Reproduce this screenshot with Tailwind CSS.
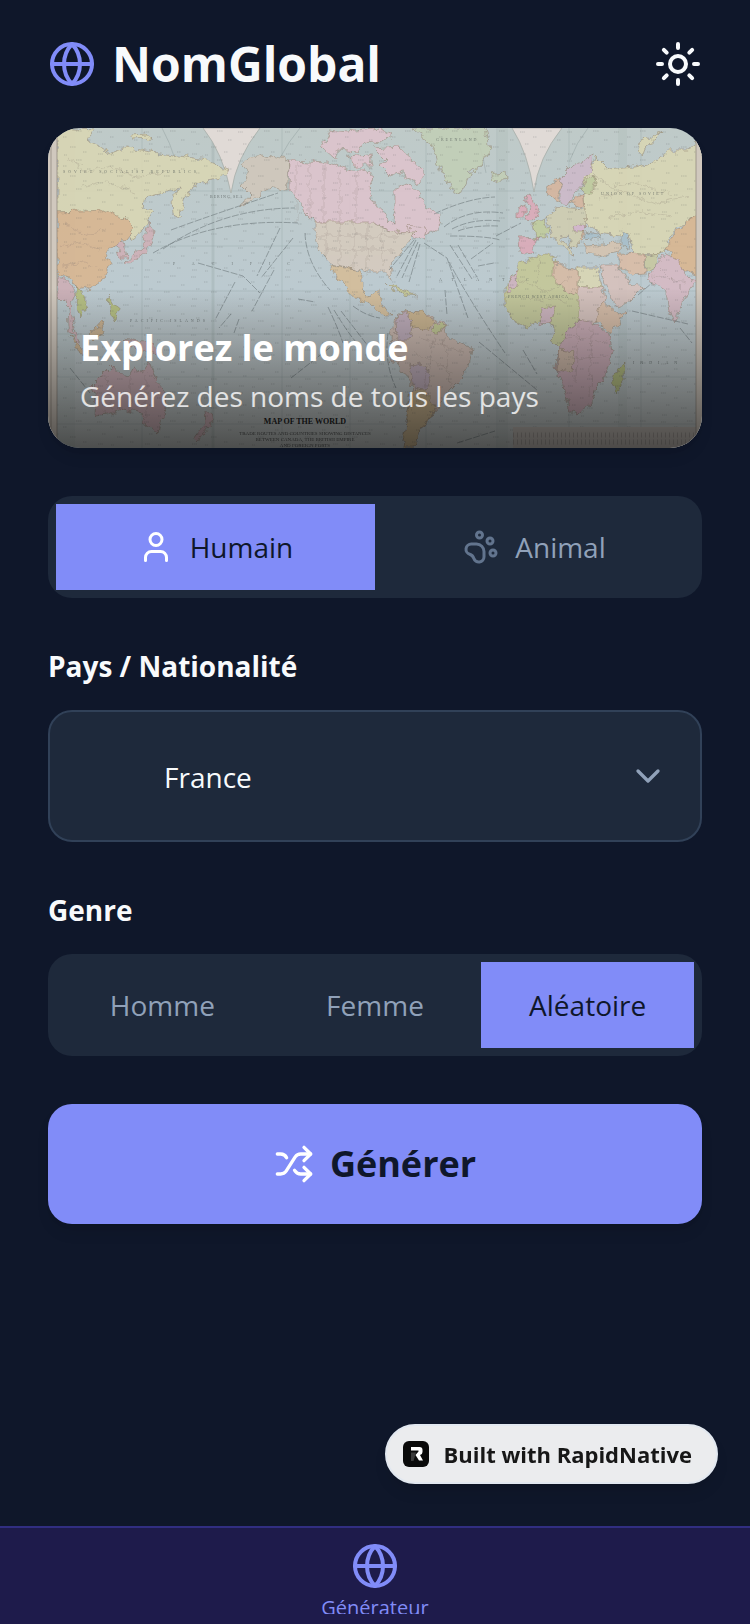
<!DOCTYPE html>
<html lang="fr">
    <head>
        <meta charset="utf-8">
        <meta name="viewport" content="width=device-width, initial-scale=1">
        <title>NomGlobal</title>
        <script src="https://cdn.jsdelivr.net/npm/@tailwindcss/browser@4"></script>
    </head>
    <body class="flex flex-col min-h-screen bg-[#0f172a] text-slate-50 font-['Open_Sans','Noto_Sans',sans-serif]">

        <!-- shared icons -->
        <svg class="hidden">
            <symbol id="globe" viewBox="0 0 24 24">
                <circle cx="12" cy="12" r="10"/>
                <path d="M12 2a14.5 14.5 0 0 0 0 20 14.5 14.5 0 0 0 0-20"/>
                <path d="M2 12h20"/>
            </symbol>
        </svg>

        <header class="flex items-center justify-between px-12 py-8">
            <div class="flex items-center gap-4">
                <svg class="size-12 text-[#818cf8]" fill="none" stroke="currentColor" stroke-width="2" stroke-linecap="round" stroke-linejoin="round"><use href="#globe"/></svg>
                <h1 class="text-5xl leading-16 font-bold">NomGlobal</h1>
            </div>
            <button type="button" aria-label="Changer le thème">
                <svg class="size-12" viewBox="0 0 24 24" fill="none" stroke="currentColor" stroke-width="2" stroke-linecap="round" stroke-linejoin="round">
                    <circle cx="12" cy="12" r="4"/>
                    <path d="M12 2v2M12 20v2M4.93 4.93l1.41 1.41M17.66 17.66l1.41 1.41M2 12h2M20 12h2M6.34 17.66l-1.41 1.41M19.07 4.93l-1.41 1.41"/>
                </svg>
            </button>
        </header>

        <main class="flex flex-col flex-1 gap-12 px-12 pb-12">

            <section class="relative h-80 rounded-4xl overflow-hidden shadow-lg">
                <svg class="w-full h-full" viewBox="0 0 654 320" preserveAspectRatio="xMidYMid slice" aria-hidden="true">
                    <defs>
                        <linearGradient id="sea" x1="0" y1="0" x2="0" y2="1">
                            <stop offset="0" stop-color="#bfcac8"/>
                            <stop offset=".5" stop-color="#bccad0"/>
                            <stop offset="1" stop-color="#c0c4c2"/>
                        </linearGradient>
                        <filter id="coast" x="-5%" y="-5%" width="110%" height="110%">
                            <feTurbulence type="fractalNoise" baseFrequency=".13" numOctaves="3" seed="4" result="n"/>
                            <feDisplacementMap in="SourceGraphic" in2="n" scale="9" xChannelSelector="R" yChannelSelector="G"/>
                        </filter>
                        <pattern id="places" width="47" height="29" patternUnits="userSpaceOnUse">
                            <path d="M2 4h5M15 9h4M28 3h6M39 12h4M7 16h4M22 19h6M35 24h4M3 26h5M16 27h3" stroke="#4d5353" stroke-width=".6" stroke-dasharray="1.4 .7" opacity=".4"/>
                        </pattern>
                    </defs>
                    <rect width="654" height="320" fill="url(#sea)"/>

                    <!-- paper folds and graticule -->
                    <path d="M9 0h18v320H9zM163 0h4v320h-4zM450 0h10v320h-10zM570 0h9v320h-9z" fill="#8e9c96" opacity=".1"/>
                    <path d="M94 0v320M165 0v320M234 0v320M302 0v320M378 0v320M449 0v320M521 0v320M593 0v320M8 63h640M8 118h640M8 163h640M8 206h640M8 249h640M8 296h640" fill="none" stroke="#859391" stroke-width=".6" opacity=".4"/>
                    <path d="M114 0q8 14 14 34M252 0q-12 14-20 30M424 0q10 20 14 45M540 0q-12 15-18 32" fill="none" stroke="#859391" stroke-width=".6" opacity=".6"/>
                    <path d="M155 0Q175 25 183 65Q188 30 212 0ZM464 0Q480 25 486 64Q490 30 514 0Z" fill="#e0dad6" stroke="#a5aaa5" stroke-width=".7"/>

                    <!-- land -->
                    <g filter="url(#coast)" opacity=".88" stroke="#86745f" stroke-width=".8" stroke-opacity=".6" stroke-linejoin="round">
                        <g fill="#dad7b3">
                            <path d="M9 0L46 2L38 12L52 19L62 25L79 19L102 24L125 27L159 32L180 42L175 49L155 54L145 58L137 70L131 89L125 87L124 72L132 60L115 64L98 69L96 79L104 84L95 102L84 112L75 92L55 84L9 84Z"/>
                            <path d="M535 49L549 29L562 42L585 39L605 35L622 22L640 22L654 10V87L629 99L619 115L622 120L609 127L586 126L582 106L572 108L552 105L535 92Z"/>
                            <path d="M588 24L592 14L615 4L607 12L597 20L594 28ZM82 7L98 6L103 10L85 11Z"/>
                            <path d="M530 139L549 139L554 159L530 159Z"/>
                        </g>
                        <g fill="#dab58f">
                            <path d="M9 84L57 82L75 89L86 100L74 115L61 120L57 125L62 135L57 149L44 159L30 162L22 149L9 147Z"/>
                            <path d="M654 84L629 102L619 119L629 139L654 149Z"/>
                        </g>
                        <g fill="#cfafb6">
                            <path d="M9 149L20 152L27 165L22 179L27 205L33 214L29 216L21 199L20 179L10 169Z"/>
                            <path d="M69 117L76 114L79 130L72 130ZM101 92L106 109L98 124L81 137L77 135L95 119L98 105Z"/>
                            <path d="M42 259L54 247L64 237L72 246L79 249L85 239L94 244L101 232L108 252L118 265L119 282L112 294L110 306L99 297L94 285L75 281L59 286L47 287L48 272Z"/>
                            <path d="M157 282L166 289L161 299L149 314L146 311L158 295Z"/>
                            <path d="M74 211L105 215L115 230L94 222Z"/>
                        </g>
                        <path d="M29 159L38 171L38 182L32 190L28 175ZM61 167L69 182L68 194L62 182ZM568 244L577 234L576 252L569 265L565 258Z" fill="#b5bf7b"/>
                        <path d="M41 207L54 192L57 204L47 212ZM22 207L36 224L33 228Z" fill="#cdb18d"/>

                        <path d="M194 37L204 29L214 26L242 32L239 63L227 60L219 61L205 72L190 80L204 67L194 57L201 49Z" fill="#d1c7ba"/>
                        <g fill="#dfc3cc">
                            <path d="M242 32L279 34L302 42L317 42L327 49L321 59L324 75L334 82L341 92L346 97L347 75L347 59L361 55L374 69L378 79L388 84L393 96L384 104L370 108L344 104L329 96L267 94L257 84L251 70L241 62Z"/>
                            <path d="M274 19L282 2L300 4L332 0L344 7L334 15L318 13L310 24L290 22L286 30ZM326 20L350 18L365 32L376 47L369 57L352 44L342 48L332 38L340 34ZM300 28L322 26L324 38L306 38ZM360 97L378 100L376 112L362 107Z"/>
                        </g>
                        <path d="M267 94L324 94L344 104L368 105L362 111L352 126L342 137L344 151L338 144L322 144L307 141L284 136L271 121L267 104Z" fill="#d7cbbe"/>
                        <path d="M281 136L307 141L314 146L314 161L322 169L332 162L333 174L343 188L336 188L324 177L307 170L296 158Z" fill="#d6bd98"/>
                        <path d="M336 155L352 161L370 168L354 166Z" fill="#c6c894"/>
                        <path d="M362 0L437 0L441 22L431 39L421 47L412 66L404 61L392 42L386 22L377 9ZM442 46L457 44L458 51L446 54Z" fill="#c2ceb5"/>

                        <path d="M347 189L357 182L374 184L396 195L399 209L424 222L421 237L414 249L402 261L397 271L385 284L372 305L367 320L354 320L361 279L364 255L345 232L343 209Z" fill="#ccb7ad"/>
                        <path d="M348 189L357 183L364 195L362 212L349 212ZM362 238L374 236L384 250L378 262L366 260Z" fill="#c0abb9"/>
                        <path d="M359 183L374 184L386 193L378 205L364 197ZM363 262L378 264L387 280L372 305L367 320L354 320Z" fill="#ccb38a"/>
                        <path d="M386 193L396 197L394 206L385 204Z" fill="#c2c78f"/>

                        <path d="M476 69L482 67L491 85L487 92L478 91L482 80ZM470 81L477 77L477 89L470 89ZM470 110L491 109L486 122L477 127L471 124Z" fill="#dca9b8"/>
                        <path d="M484 97L496 91L501 104L496 110L487 109ZM540 50L531 62L544 66L548 48Z" fill="#c1cb9b"/>
                        <path d="M512 50L526 36L545 28L542 44L531 60L520 78L512 74Z" fill="#cdb9c9"/>
                        <path d="M498 60L512 50L510 72L499 66ZM524 72L534 66L536 78L526 80ZM527 104L536 104L534 114L526 114Z" fill="#d6b49d"/>
                        <path d="M498 89L511 80L537 82L538 97L530 117L524 121L520 107L512 109L526 126L520 126L504 108Z" fill="#d0ccb0"/>
                        <path d="M525 98q6-4 13 0l-2 6h-10z" fill="#d4b4cb"/>

                        <path d="M537 117L572 115L571 124L551 128L537 126Z" fill="#d5c3b0"/>
                        <path d="M571 125L597 126L597 146L584 147L571 137Z" fill="#dbbca6"/>
                        <path d="M551 137L571 137L581 154L596 159L581 174L569 179L557 157ZM529 159L554 159L557 169L551 194L537 197L530 190Z" fill="#d8c1bb"/>
                        <path d="M599 150L617 125L631 132L636 147L649 154L641 164L631 181L629 196L621 182L617 161Z" fill="#d6b9c3"/>
                        <path d="M597 128L612 126L606 140L598 145Z" fill="#c8c8a0"/>
                        <path d="M472 134L491 127L506 127L507 137L517 161L531 167L531 192L517 205L511 221L504 214L506 199L494 192L477 199L464 191L457 177L457 161L467 144Z" fill="#c4c796"/>
                        <path d="M462 153L470 140L468 158L459 164ZM494 180L508 178L503 194L493 196Z" fill="#cfb2be"/>
                        <path d="M506 136L530 141L530 167L517 161L506 152ZM554 172L571 187L580 184L563 205L549 194Z" fill="#d8baa3"/>
                        <path d="M511 221L517 205L531 192L544 195L561 205L564 224L557 251L549 259L544 274L531 286L522 284L514 254L507 239Z" fill="#cba9b3"/>
                        <path d="M511 222L526 224L524 244L508 240Z" fill="#ceb6a3"/>

                        <!-- inner frontiers and rivers -->
                        <path d="M248 34v60M262 36v58M276 36v58M292 42v52M308 44v50M278 94v38M292 94v42M306 94v46M320 94v50M334 98v40M270 108h80M276 122h70M18 96l22 12 18-8M14 120l20-6 18 8M14 138l22-4 14 6M20 30l20 14 22-6 24 12 30-6M34 60l24-6 28 10M545 45l18 14 28-4 32 12M550 70l28-6 30 12 34-8M560 90l30-6 34 6M470 150l28 14 24-14M478 170l40 4M492 130l-4 26M514 208l44 6M516 232l44-4M530 196l-2 60M544 198l-2 70M372 210l44 14M366 224l38 20M386 208l-10 50M396 212l6 44M60 250l4 32M82 248v34M98 246v44M612 140l20 20M604 148l34 6" fill="none" stroke="#7e6f68" stroke-width=".6" stroke-opacity=".4"/>
                        <path d="M574 102l8 6-2 12-6-2zM538 104l14 2-2 6-14-2z" fill="#a8bfca"/>
                    </g>
                    <rect x="8" y="0" width="640" height="320" fill="url(#places)"/>

                    <!-- shipping routes -->
                    <g fill="none" stroke="#5d676a" stroke-width=".7" stroke-dasharray="7 1.5" opacity=".7">
                        <path d="M105 125Q165 90 250 95M115 121Q175 80 247 80M123 102Q155 90 230 65M150 135L195 148L212 165M232 100L209 148M245 110L213 150M226 142L204 183M187 154L167 192M183 186L171 200M191 191L186 205M257 105Q258 135 282 162M280 179Q290 200 295 215M286 182Q300 205 308 214M293 183Q310 205 320 218M305 178Q318 188 332 190M250 171l17 3"/>
                        <path d="M386 86Q420 70 447 69M396 99Q420 80 455 85M404 101Q425 90 452 93M410 103Q425 97 450 98M376 115L399 130L420 190M401 134Q420 170 457 225M402 108Q440 108 452 112M402 117l22 34M410 117l19 32M448 108l25-13M423 131l22-16M430 138l16-3M368 112L348 150M370 114L354 150M372 116L361 154M366 112L341 142M431 214L489 262M475 222l14 24M397 162l2 25M584 183L640 196M632 200l12 15M590 167l14-12M340 205Q336 235 348 260M243 250l46-36M409 315l38-12M22 240l20 25"/>
                    </g>
                    <g font-family="Liberation Serif, serif" fill="#4f5655" font-size="4" opacity=".7">
                        <text x="125" y="137" letter-spacing="17">PACIFIC</text>
                        <text x="15" y="45" letter-spacing="3">SOVIET SOCIALIST REPUBLICS</text>
                        <text x="162" y="70" letter-spacing="1">BERING SEA</text>
                        <text x="388" y="13" letter-spacing="2">GREENLAND</text>
                        <text x="391" y="153" letter-spacing="10">ATLANTIC</text>
                        <text x="553" y="67" letter-spacing="2">UNION OF SOVIET</text>
                        <text x="460" y="170" letter-spacing="1">FRENCH WEST AFRICA</text>
                        <text x="585" y="236" letter-spacing="6">INDIAN</text>
                        <text x="82" y="194" letter-spacing="3">PACIFIC ISLANDS</text>
                    </g>

                    <!-- cartouche and scale -->
                    <g font-family="Liberation Serif, serif" text-anchor="middle" fill="#1e1e1e">
                        <text x="257" y="296" font-size="8" font-weight="bold">MAP OF THE WORLD</text>
                        <text x="257" y="307" font-size="5" opacity=".7">TRADE ROUTES AND COUNTRIES SHOWING DISTANCES</text>
                        <text x="257" y="313" font-size="5" opacity=".7">BETWEEN CANADA, THE BRITISH EMPIRE</text>
                        <text x="257" y="319" font-size="5" opacity=".7">AND FOREIGN PORTS</text>
                    </g>
                    <path d="M465 299H648V320H465Z" fill="#c0bab4"/>
                    <path d="M465 307H648M465 314H648" stroke="#5a5450" stroke-width="5" stroke-dasharray="1 3" opacity=".25"/>
                    <path d="M0 0H9V320H0ZM648 0H654V320H648Z" fill="#d0c8be"/>
                    <path d="M3 0V320M9 0V320M648 0V320" stroke="#8b8378" stroke-width=".7"/>
                </svg>
                <div class="absolute inset-x-0 bottom-0 p-8 bg-linear-to-t from-black/60 to-transparent text-white">
                    <h2 class="text-4xl leading-14 font-bold">Explorez le monde</h2>
                    <p class="text-[28px] leading-10 text-white/80">Générez des noms de tous les pays</p>
                </div>
            </section>

            <div class="grid grid-cols-2 p-2 rounded-3xl bg-[#1e293b] text-[28px] leading-[38px]" role="group" aria-label="Type">
                <button type="button" aria-pressed="true" class="flex items-center justify-center gap-4 py-6 bg-[#818cf8] text-slate-900">
                    <svg class="size-9 text-white" viewBox="0 0 24 24" fill="none" stroke="currentColor" stroke-width="2" stroke-linecap="round" stroke-linejoin="round">
                        <path d="M19 21v-2a4 4 0 0 0-4-4H9a4 4 0 0 0-4 4v2"/>
                        <circle cx="12" cy="7" r="4"/>
                    </svg>
                    Humain
                </button>
                <button type="button" aria-pressed="false" class="flex items-center justify-center gap-4 py-6 text-slate-400">
                    <svg class="size-9 text-slate-500" viewBox="0 0 24 24" fill="none" stroke="currentColor" stroke-width="2" stroke-linecap="round" stroke-linejoin="round">
                        <circle cx="11" cy="4" r="2"/>
                        <circle cx="18" cy="8" r="2"/>
                        <circle cx="20" cy="16" r="2"/>
                        <path d="M9 10a5 5 0 0 1 5 5v3.5a3.5 3.5 0 0 1-6.84 1.045Q6.52 17.48 4.46 16.84A3.5 3.5 0 0 1 5.5 10Z"/>
                    </svg>
                    Animal
                </button>
            </div>

            <div class="flex flex-col gap-6">
                <label for="country" class="text-[28px] leading-10 font-bold">Pays / Nationalité</label>
                <div class="relative">
                    <select id="country" class="w-full h-33 pt-0.5 pl-[114px] pr-20 appearance-none rounded-3xl border-2 border-slate-700 bg-[#1e293b] text-[28px]">
                        <option>France</option>
                    </select>
                    <svg class="absolute right-8.5 inset-y-0 my-auto size-10 text-slate-400 pointer-events-none" viewBox="0 0 24 24" fill="none" stroke="currentColor" stroke-width="2" stroke-linecap="round" stroke-linejoin="round"><path d="m6 9 6 6 6-6"/></svg>
                </div>
            </div>

            <div class="flex flex-col gap-6">
                <h3 id="gender" class="text-[28px] leading-10 font-bold">Genre</h3>
                <div class="grid grid-cols-3 p-2 rounded-3xl bg-[#1e293b] text-[28px] leading-[38px] text-slate-400" role="group" aria-labelledby="gender">
                    <button type="button" aria-pressed="false" class="py-6">Homme</button>
                    <button type="button" aria-pressed="false" class="py-6">Femme</button>
                    <button type="button" aria-pressed="true" class="py-6 bg-[#818cf8] text-slate-900">Aléatoire</button>
                </div>
            </div>

            <button type="button" class="flex items-center justify-center gap-4 py-8 rounded-3xl bg-[#818cf8] text-slate-900 text-4xl leading-14 font-bold shadow-lg">
                <svg class="size-10 text-white" viewBox="0 0 24 24" fill="none" stroke="currentColor" stroke-width="2" stroke-linecap="round" stroke-linejoin="round">
                    <path d="m18 14 4 4-4 4M18 2l4 4-4 4"/>
                    <path d="M2 18h1.973a4 4 0 0 0 3.3-1.7l5.454-8.6a4 4 0 0 1 3.3-1.7H22"/>
                    <path d="M2 6h1.972a4 4 0 0 1 3.6 2.2M22 18h-6.041a4 4 0 0 1-3.3-1.8l-.359-.45"/>
                </svg>
                Générer
            </button>
        </main>

        <a href="#" class="fixed right-8 bottom-35 flex items-center gap-3.5 h-15 pl-4 pr-6 rounded-full border-2 border-slate-200 bg-[#ebecee] text-neutral-900 text-[22px] font-bold shadow-lg">
            <svg class="size-[26px]" viewBox="0 0 26 26">
                <rect width="26" height="26" rx="6" fill="#0a0a0a"/>
                <path d="M8 11.500h5l-2.500 8.500H8z" fill="#3a3a3a"/>
                <path d="M8 6h8.500q3 0 3 3v2q0 2.500-2.500 3l3 5.500h-4L12.500 14l3-3.500V9.500H8z" fill="#fff"/>
            </svg>
            Built with RapidNative
        </a>

        <nav class="sticky bottom-0 h-[98px] border-t-2 border-[#312e81] bg-[#1e1b4b] text-[#818cf8]">
            <a href="#" class="flex flex-col items-center gap-1 h-[86px] pt-3.5 overflow-hidden text-xl leading-7">
                <svg class="size-12 shrink-0" fill="none" stroke="currentColor" stroke-width="2" stroke-linecap="round" stroke-linejoin="round"><use href="#globe"/></svg>
                Générateur
            </a>
        </nav>
    </body>
</html>
